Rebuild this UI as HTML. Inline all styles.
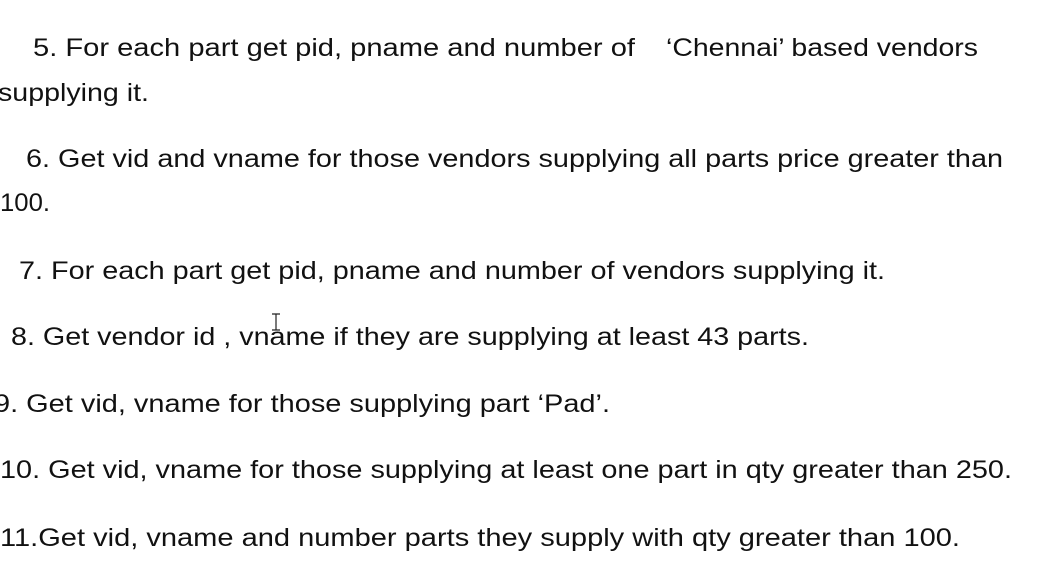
<!DOCTYPE html>
<html><head><meta charset="utf-8"><style>
html,body{margin:0;padding:0;background:#fff;width:1060px;height:578px;overflow:hidden}
svg text{font-family:"Liberation Sans",sans-serif;font-size:25px;fill:#111}
</style></head><body>
<svg width="1060" height="578" xmlns="http://www.w3.org/2000/svg">
<text x="33" y="56" textLength="602" lengthAdjust="spacingAndGlyphs">5.  For each part get pid, pname and number of</text>
<text x="666" y="56" textLength="312" lengthAdjust="spacingAndGlyphs">‘Chennai’ based vendors</text>
<text x="-2" y="101" textLength="151" lengthAdjust="spacingAndGlyphs">supplying it.</text>
<text x="26" y="167" textLength="977" lengthAdjust="spacingAndGlyphs">6. Get vid and vname for those vendors supplying all parts price greater than</text>
<text x="0" y="211" textLength="50" lengthAdjust="spacingAndGlyphs">100.</text>
<text x="19" y="279" textLength="866" lengthAdjust="spacingAndGlyphs">7. For each part get pid, pname and number of vendors supplying it.</text>
<text x="11" y="345" textLength="798" lengthAdjust="spacingAndGlyphs">8. Get vendor id , vname if they are supplying at least 43 parts.</text>
<text x="-6" y="412" textLength="616" lengthAdjust="spacingAndGlyphs">9. Get vid, vname for those supplying part ‘Pad’.</text>
<text x="0" y="478" textLength="1012" lengthAdjust="spacingAndGlyphs">10. Get vid, vname for those supplying at least one part in qty greater than 250.</text>
<text x="0" y="546" textLength="960" lengthAdjust="spacingAndGlyphs">11.Get vid, vname and number parts they supply with qty greater than 100.</text>
<path d="M272 314h8M276 314v16M272 330h8" stroke="#222" stroke-width="1.2" fill="none"/>
</svg>
</body></html>
